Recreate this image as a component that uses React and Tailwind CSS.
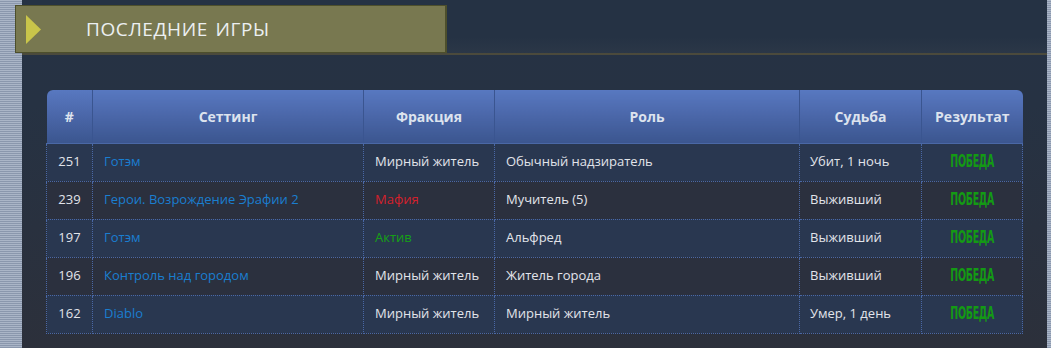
import React from 'react';

const games = [
  { id: 251, setting: 'Готэм', faction: 'Мирный житель', fc: 'text-[#e2e4ea]', role: 'Обычный надзиратель', fate: 'Убит, 1 ночь' },
  { id: 239, setting: 'Герои. Возрождение Эрафии 2', faction: 'Мафия', fc: 'text-[#d4202c]', role: 'Мучитель (5)', fate: 'Выживший' },
  { id: 197, setting: 'Готэм', faction: 'Актив', fc: 'text-[#16a016]', role: 'Альфред', fate: 'Выживший' },
  { id: 196, setting: 'Контроль над городом', faction: 'Мирный житель', fc: 'text-[#e2e4ea]', role: 'Житель города', fate: 'Выживший' },
  { id: 162, setting: 'Diablo', faction: 'Мирный житель', fc: 'text-[#e2e4ea]', role: 'Мирный житель', fate: 'Умер, 1 день' },
];

const stripes =
  'bg-[repeating-linear-gradient(180deg,#aab5c7_0px,#aab5c7_1px,#8a97ad_1px,#8a97ad_2px)]';

const App = () => {
  return (
    <div className="flex h-[348px] w-[1051px] overflow-hidden font-['Open_Sans',sans-serif]">
      {/* left stripes */}
      <div className={`w-[22px] shrink-0 ${stripes}`}></div>

      {/* main panel */}
      <div className="flex-1 bg-[linear-gradient(180deg,#263244_0%,#263243_30%,#2c303b_100%)]">
        {/* title bar */}
        <div className="h-[55px] pt-[5px] border-b-2 border-[#4b4a3c] bg-[linear-gradient(180deg,#253244_0%,#253244_70%,#2b3747_100%)]">
          <div className="-ml-[7px] flex h-[48px] w-[432px] items-center border border-r-2 border-[#4d4f2c] bg-[#787850]">
            <svg width="15" height="29" viewBox="0 0 15 29" className="ml-[10px] shrink-0">
              <polygon points="0,0 15,14.5 0,29" fill="#c9c54a" />
            </svg>
            <span className="ml-[45px] text-[19px] tracking-[0.6px] text-[#eceff2] [word-spacing:2px]">
              ПОСЛЕДНИЕ ИГРЫ
            </span>
          </div>
        </div>

        {/* table */}
        <div className="ml-[24px] mt-[35px] w-[976px]">
          <table className="w-[976px] table-fixed border-collapse text-[13px]">
            <colgroup>
              <col className="w-[46px]" />
              <col className="w-[271px]" />
              <col className="w-[131px]" />
              <col className="w-[305px]" />
              <col className="w-[122px]" />
              <col className="w-[101px]" />
            </colgroup>
            <thead>
              <tr className="h-[53px] text-[14px] font-semibold text-[#dde3ee]">
                {['#', 'Сеттинг', 'Фракция', 'Роль', 'Судьба', 'Результат'].map((h, i) => (
                  <th
                    key={h}
                    className={`border-b border-b-[#4a68a6] bg-[linear-gradient(180deg,#5878c0_0%,#4a66a8_50%,#3b568f_100%)] p-0 text-center ${
                      i > 0 ? 'border-l border-l-[#3a5590]' : ''
                    } ${i === 0 ? 'rounded-tl-[6px]' : ''} ${i === 5 ? 'rounded-tr-[6px]' : ''}`}
                  >
                    {h}
                  </th>
                ))}
              </tr>
            </thead>
            <tbody>
              {games.map((g, idx) => (
                <tr
                  key={g.id}
                  className={`h-[38px] ${idx % 2 === 0 ? 'bg-[#293750]' : 'bg-[#2b303e]'}`}
                >
                  <td className="border border-dotted border-[#4a68a6] text-center text-[#e2e4ea]">{g.id}</td>
                  <td className="border border-dotted border-[#4a68a6] pl-[11px] text-[#1a7ed0]">{g.setting}</td>
                  <td className={`border border-dotted border-[#4a68a6] pl-[11px] ${g.fc}`}>{g.faction}</td>
                  <td className="border border-dotted border-[#4a68a6] pl-[11px] text-[#e2e4ea]">{g.role}</td>
                  <td className="border border-dotted border-[#4a68a6] pl-[10px] text-[#e2e4ea]">{g.fate}</td>
                  <td className="border border-dotted border-[#4a68a6] text-center">
                    <span className="inline-block scale-x-[0.62] font-['DejaVu_Sans_Condensed','DejaVu_Sans',sans-serif] text-[17px] font-bold tracking-[-0.5px] text-[#149a14]">
                      ПОБЕДА
                    </span>
                  </td>
                </tr>
              ))}
            </tbody>
          </table>
        </div>
      </div>

      {/* right stripes */}
      <div className={`w-[4px] shrink-0 ${stripes}`}></div>
    </div>
  );
};

export default App;
